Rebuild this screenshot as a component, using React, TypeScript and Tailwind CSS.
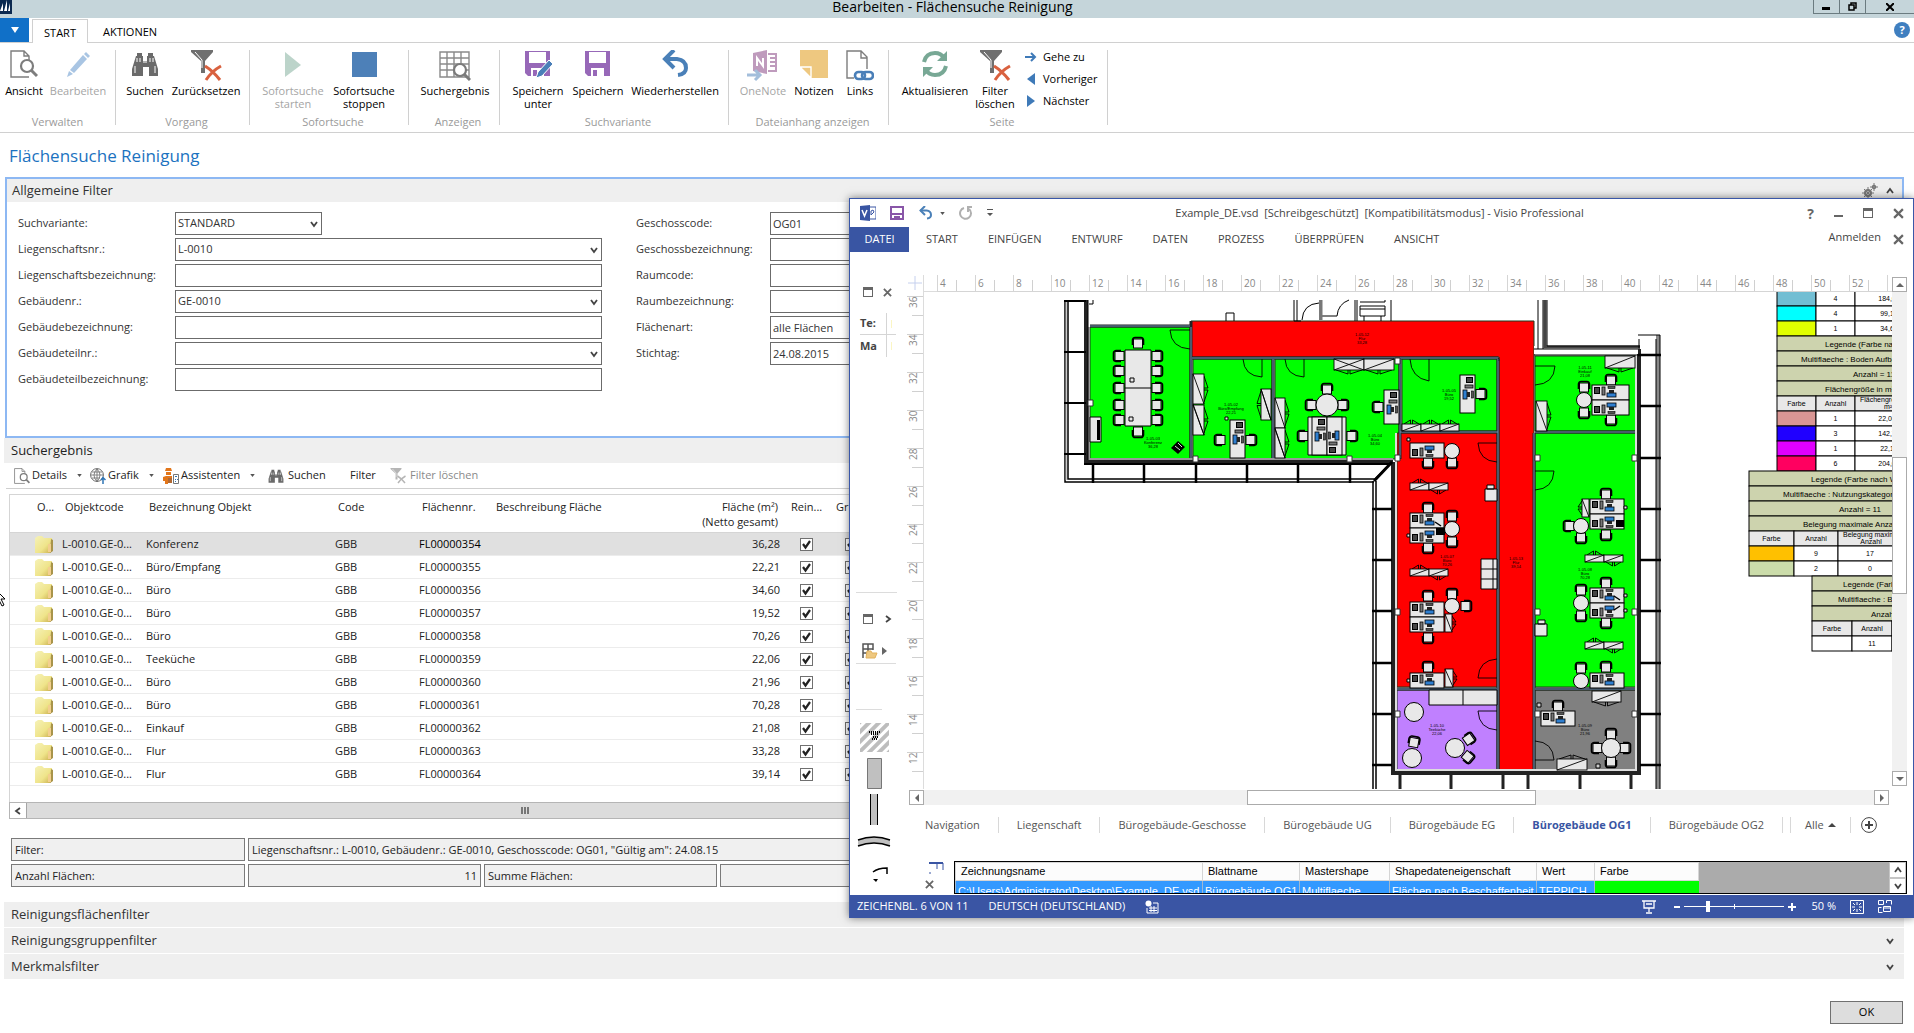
import { ReactNode } from 'react';

type Row = { name: string; nr: string; area: string };

const ROWS: Row[] = [
  { name: 'Konferenz', nr: 'FL00000354', area: '36,28' },
  { name: 'Büro/Empfang', nr: 'FL00000355', area: '22,21' },
  { name: 'Büro', nr: 'FL00000356', area: '34,60' },
  { name: 'Büro', nr: 'FL00000357', area: '19,52' },
  { name: 'Büro', nr: 'FL00000358', area: '70,26' },
  { name: 'Teeküche', nr: 'FL00000359', area: '22,06' },
  { name: 'Büro', nr: 'FL00000360', area: '21,96' },
  { name: 'Büro', nr: 'FL00000361', area: '70,28' },
  { name: 'Einkauf', nr: 'FL00000362', area: '21,08' },
  { name: 'Flur', nr: 'FL00000363', area: '33,28' },
  { name: 'Flur', nr: 'FL00000364', area: '39,14' },
];

/* ---------- icons ---------- */

function ViewIcon({ className = 'w-7 h-7' }: { className?: string }) {
  return (
    <svg className={className} viewBox="0 0 28 28" fill="none" stroke="#7d7d7d">
      <path d="M19 27H1V1h13l5 5v5M14 1v5h5" strokeWidth="1.4" />
      <circle cx="17" cy="16" r="6" strokeWidth="2.2" fill="#fff" />
      <path d="M21 20l6 6" strokeWidth="3" />
    </svg>
  );
}

function PencilIcon() {
  return (
    <svg className="w-7 h-7" viewBox="0 0 28 28">
      <path d="M6 20L19 5l4 4L10 23z" fill="#a9c5e3" />
      <path d="M20 4l2-2 4 4-2 2zM5 21l4 3-6 3z" fill="#a9c5e3" />
    </svg>
  );
}

function BinocularsIcon({ className = 'w-7 h-7' }: { className?: string }) {
  return (
    <svg className={className} viewBox="0 0 28 28" fill="#6a6a6a">
      <path d="M6 3h5v3h1v5h4V6h1V3h5v3h1l4 13v7h-9v-9h-6v9H1v-7L5 6h1z" />
      <path d="M6 8v4M9 8v4M19 8v4M22 8v4M4 16v7M24 16v7M12 12h4" stroke="#fff" strokeWidth="1" />
    </svg>
  );
}

function FilterClearIcon({ className = 'w-8 h-8', muted = false }: { className?: string; muted?: boolean }) {
  return (
    <svg className={className} viewBox="0 0 32 32">
      <path d="M1 0h22v2l-8 9v12h-4V11L1 2z" fill={muted ? '#b5b5b5' : '#6f6f6f'} />
      <path d="M5 2l7 8v8" stroke="#fff" fill="none" />
      <path d="M15 16q8 5 15 14M31 16q-9 5-15 14" stroke={muted ? '#b5b5b5' : '#d9613f'} strokeWidth="3" fill="none" />
    </svg>
  );
}

function SearchResultIcon() {
  return (
    <svg className="w-8 h-8" viewBox="0 0 32 32" fill="none" stroke="#8a8a8a">
      <path d="M1 2h29v25H1zM1 8h29M1 14h29M1 20h29M8 2v25M15 2v25M22 2v25" strokeWidth="1.4" />
      <circle cx="21" cy="20" r="6" fill="#fff" stroke="#7a7a7a" strokeWidth="2.2" />
      <path d="M25 24l6 6" stroke="#7a7a7a" strokeWidth="3" />
    </svg>
  );
}

function SaveIcon({ pencil = false }: { pencil?: boolean }) {
  return (
    <svg className="w-7 h-7" viewBox="0 0 28 28">
      <path d="M1 1h25v25H4l-3-3z" fill="#9768b8" />
      <path d="M5 2h17v11H5zM7 18h13v8H7z" fill="#fff" />
      <path d="M9 20h4v6H9z" fill="#9768b8" />
      {pencil && <path d="M12 28l2-6 11-12 4 4-11 12z" fill="#4a7fb8" stroke="#fff" strokeWidth="1" />}
    </svg>
  );
}

function UndoIcon({ className = 'w-7 h-7' }: { className?: string }) {
  return (
    <svg className={className} viewBox="0 0 28 28" fill="none" stroke="#4a80b8">
      <path d="M3 9h13q9 1 9 9 0 6-8 7" strokeWidth="4" />
      <path d="M13 0L4 9l9 9" strokeWidth="4" />
    </svg>
  );
}

function OneNoteIcon() {
  return (
    <svg className="w-8 h-8" viewBox="0 0 32 32">
      <path d="M6 3l14-3v24L6 21z" fill="#bf9bbd" />
      <path d="M21 4h8v17h-8" fill="none" stroke="#bf9bbd" strokeWidth="2" />
      <path d="M23 8h6M23 12h6M23 16h6" stroke="#bf9bbd" strokeWidth="2" />
      <path d="M10 16V8l6 8V8" stroke="#fff" strokeWidth="2" fill="none" />
      <path d="M0 25h12M8 20l5 5-5 5" stroke="#a3bedb" strokeWidth="3" fill="none" />
    </svg>
  );
}

function NoteIcon() {
  return (
    <svg className="w-7 h-7" viewBox="0 0 28 28">
      <path d="M0 0h28v28H11L0 17z" fill="#eec880" />
      <path d="M0 17h11v11z" fill="#eec880" stroke="#fff" strokeWidth="1.4" />
    </svg>
  );
}

function LinkIcon() {
  return (
    <svg className="w-7 h-8" viewBox="0 0 28 32" fill="none">
      <path d="M8 28H1V1h14l6 6v12M15 1v7h6" stroke="#7d7d7d" strokeWidth="1.4" />
      <rect x="9" y="22" width="10" height="7" rx="3.5" stroke="#4a7fb8" strokeWidth="2.6" />
      <rect x="16" y="22" width="11" height="7" rx="3.5" stroke="#4a7fb8" strokeWidth="2.6" />
    </svg>
  );
}

function RefreshIcon() {
  return (
    <svg className="w-7 h-7" viewBox="0 0 28 28" fill="none" stroke="#78a895" strokeWidth="4">
      <path d="M3 12Q5 3 14 3q6 0 9 5M25 16q-2 9-11 9-6 0-9-5" />
      <path d="M26 1v10H16zM2 27V17h10z" fill="#78a895" stroke="none" />
    </svg>
  );
}

function Chevron({ className = 'w-2 h-2' }: { className?: string }) {
  return (
    <svg className={className} viewBox="0 0 8 8" fill="none" stroke="#444" strokeWidth="1.8">
      <path d="M1 2l3 4 3-4" />
    </svg>
  );
}

function Caret() {
  return (
    <svg className="w-[5px] h-[3px]" viewBox="0 0 6 4" fill="#555">
      <path d="M0 0h6L3 4z" />
    </svg>
  );
}

function GlobeIcon() {
  return (
    <svg className="w-4 h-4" viewBox="0 0 16 16" fill="none" stroke="#6a6a6a">
      <circle cx="7" cy="7" r="6.4" />
      <path d="M7 1v13M1 7h12M2 4h10M2 10h8M7 1Q1 7 7 13.500M7 1q6 6 0 12.500" strokeWidth=".8" />
      <path d="M13 16V10M11 12l2-2.500L15.500 12" stroke="#2f75b5" strokeWidth="1.5" />
    </svg>
  );
}

function WizardIcon() {
  return (
    <svg className="w-4 h-4" viewBox="0 0 16 16">
      <path d="M3 0h5l1 3H2zM3 4h5v3H3zM0 9l3-1h6v3H5v5H2v-3H0z" fill="#e2761b" />
      <path d="M5 10h4v5H5z" fill="#b06a35" />
      <path d="M10.500 6.500h5v9h-5z" fill="#fff" stroke="#777" />
      <path d="M12 8h2v1h-2zM12 11h1v1h-1zM14 11h1v1h-1zM12 13h1v1h-1z" fill="#2f75b5" />
    </svg>
  );
}

function FolderIcon() {
  return (
    <svg className="w-5 h-5" viewBox="0 0 20 20">
      <defs>
        <linearGradient id="folder" x1="0" y1="0" x2="1" y2="1">
          <stop offset="0" stopColor="#f6f2b8" />
          <stop offset=".6" stopColor="#efe48a" />
          <stop offset="1" stopColor="#c9ad4d" />
        </linearGradient>
      </defs>
      <path d="M1 4l3-2h4l2 2h8v13l-2 2H1z" fill="url(#folder)" />
      <path d="M17 5l2 1v11l-3 2" fill="#a8944a" />
      <path d="M14 10h3v8h-3z" fill="#f3cf8e" />
    </svg>
  );
}

/* ---------- ribbon ---------- */

function RibbonButton({ icon, label, className, disabled }: { icon: ReactNode; label: string; className: string; disabled?: boolean }) {
  return (
    <button
      disabled={disabled}
      className={`flex flex-col items-center whitespace-pre-line text-center leading-[13px] text-black disabled:text-[#a5a5a5] ${className}`}
    >
      <span className="flex h-[34px] items-start justify-center">{icon}</span>
      {label}
    </button>
  );
}

function RibbonGroup({ title, className, children }: { title: string; className: string; children: ReactNode }) {
  return (
    <div className={`flex h-[75px] flex-col justify-between border-r border-[#d0d0d0] ${className}`}>
      <div className="flex">{children}</div>
      <div className="text-center leading-[6px] text-[#9a9a9a]">{title}</div>
    </div>
  );
}

function Ribbon() {
  return (
    <div className="flex h-[90px] border-b border-[#d0d0d0] pt-[7px] text-[11px]">
      <RibbonGroup title="Verwalten" className="w-[116px]">
        <RibbonButton className="w-[48px]" icon={<ViewIcon />} label="Ansicht" />
        <RibbonButton className="w-[60px]" icon={<PencilIcon />} label="Bearbeiten" disabled />
      </RibbonGroup>
      <RibbonGroup title="Vorgang" className="w-[134px] pl-2">
        <RibbonButton className="w-[42px]" icon={<BinocularsIcon />} label="Suchen" />
        <RibbonButton className="w-[80px]" icon={<FilterClearIcon />} label="Zurücksetzen" />
      </RibbonGroup>
      <RibbonGroup title="Sofortsuche" className="w-[159px] pl-2">
        <RibbonButton
          className="w-[70px]"
          icon={<svg className="w-4 h-7" viewBox="0 0 16 28"><path d="M0 2l16 13L0 27z" fill="#bcd4ca" /></svg>}
          label={'Sofortsuche\nstarten'}
          disabled
        />
        <RibbonButton
          className="w-[72px]"
          icon={<span className="mt-0.5 h-[25px] w-[25px] bg-[#4d80b8]" />}
          label={'Sofortsuche\nstoppen'}
        />
      </RibbonGroup>
      <RibbonGroup title="Anzeigen" className="w-[91px] pl-2">
        <RibbonButton className="w-[76px]" icon={<SearchResultIcon />} label="Suchergebnis" />
      </RibbonGroup>
      <RibbonGroup title="Suchvariante" className="w-[229px] pl-2">
        <RibbonButton className="w-[60px]" icon={<SaveIcon pencil />} label={'Speichern\nunter'} />
        <RibbonButton className="w-[60px]" icon={<SaveIcon />} label="Speichern" />
        <RibbonButton className="w-[94px]" icon={<UndoIcon />} label="Wiederherstellen" />
      </RibbonGroup>
      <RibbonGroup title="Dateianhang anzeigen" className="w-[160px] pl-2">
        <RibbonButton className="w-[52px]" icon={<OneNoteIcon />} label="OneNote" disabled />
        <RibbonButton className="w-[50px]" icon={<NoteIcon />} label="Notizen" />
        <RibbonButton className="w-[42px]" icon={<LinkIcon />} label="Links" />
      </RibbonGroup>
      <RibbonGroup title="Seite" className="w-[219px] pl-2">
        <RibbonButton className="w-[76px]" icon={<RefreshIcon />} label="Aktualisieren" />
        <RibbonButton className="w-[44px]" icon={<FilterClearIcon />} label={'Filter\nlöschen'} />
        <div className="flex flex-col gap-[8px] pl-2">
          <button className="flex items-center gap-1.5 leading-[14px]">
            <svg className="w-3 h-3" viewBox="0 0 12 12" fill="none" stroke="#3f7ab8" strokeWidth="2"><path d="M0 6h10M6 2l4 4-4 4" /></svg>
            Gehe zu
          </button>
          <button className="flex items-center gap-1.5 leading-[14px]">
            <svg className="w-3 h-3" viewBox="0 0 12 12" fill="#3f7ab8"><path d="M10 0v12L2 6z" /></svg>
            Vorheriger
          </button>
          <button className="flex items-center gap-1.5 leading-[14px]">
            <svg className="w-3 h-3" viewBox="0 0 12 12" fill="#3f7ab8"><path d="M2 0v12l8-6z" /></svg>
            Nächster
          </button>
        </div>
      </RibbonGroup>
    </div>
  );
}

/* ---------- filter form ---------- */

const FIELD = 'h-[23px] border border-[#6b6b6b] bg-white px-[2px] text-[11px] text-[#333] outline-none';

function Field({ id, label, value = '', combo, small, wide }: { id: string; label: string; value?: string; combo?: boolean; small?: boolean; wide?: boolean }) {
  const width = small ? 'w-[147px]' : 'w-[427px]';
  return (
    <div className="flex h-[26px]">
      <label htmlFor={id} className={`pt-0.5 leading-[18px] whitespace-nowrap ${wide ? 'w-[134px]' : 'w-[157px]'}`}>
        {label}
      </label>
      {combo ? (
        <span className="inline-grid">
          <select id={id} defaultValue={value} className={`${FIELD} ${width} col-start-1 row-start-1 appearance-none`}>
            <option>{value}</option>
          </select>
          <Chevron className="pointer-events-none col-start-1 row-start-1 mt-2 mr-1 h-2 w-2 justify-self-end" />
        </span>
      ) : (
        <input id={id} defaultValue={value} className={`${FIELD} ${width}`} />
      )}
    </div>
  );
}

function FilterPanel() {
  return (
    <section className="mr-[10px] ml-[5px] h-[261px] border-2 border-[#8db8f3] text-[11px] text-[#333]">
      <header className="flex h-[23px] items-center justify-between bg-[#efefef] pr-[8px] pl-[5px]">
        <h2 className="text-[13px] text-[#333]">Allgemeine Filter</h2>
        <span className="flex items-center gap-2">
          <svg className="w-4 h-4" viewBox="0 0 16 16" fill="none" stroke="#777" strokeWidth="2">
            <circle cx="6" cy="10" r="3" />
            <path d="M6 4v12M0 10h12M2 6l8 8M10 6l-8 8" strokeWidth="1" />
            <circle cx="12" cy="4" r="1.5" strokeWidth="1.500" />
            <path d="M12 0v8M8 4h8" strokeWidth="1" />
          </svg>
          <Chevron className="h-2 w-2 rotate-180" />
        </span>
      </header>
      <div className="flex gap-[34px] pt-[10px] pl-[11px]">
        <div>
          <Field id="variante" label="Suchvariante:" value="STANDARD" combo small />
          <Field id="liegnr" label="Liegenschaftsnr.:" value="L-0010" combo />
          <Field id="liegbez" label="Liegenschaftsbezeichnung:" />
          <Field id="gebnr" label="Gebäudenr.:" value="GE-0010" combo />
          <Field id="gebbez" label="Gebäudebezeichnung:" />
          <Field id="teilnr" label="Gebäudeteilnr.:" combo />
          <Field id="teilbez" label="Gebäudeteilbezeichnung:" />
        </div>
        <div>
          <Field id="gcode" label="Geschosscode:" value="OG01" wide />
          <Field id="gbez" label="Geschossbezeichnung:" wide />
          <Field id="rcode" label="Raumcode:" wide />
          <Field id="rbez" label="Raumbezeichnung:" wide />
          <Field id="fart" label="Flächenart:" value="alle Flächen" wide />
          <Field id="stichtag" label="Stichtag:" value="24.08.2015" wide />
        </div>
      </div>
    </section>
  );
}

/* ---------- result list ---------- */

function Check({ label }: { label: string }) {
  return (
    <span className="inline-grid align-middle">
      <input type="checkbox" defaultChecked aria-label={label} className="col-start-1 row-start-1 h-[13px] w-[13px] appearance-none border border-[#707070] bg-white" />
      <svg className="pointer-events-none col-start-1 row-start-1 h-[13px] w-[13px]" viewBox="0 0 13 13" fill="none" stroke="#222" strokeWidth="2.200">
        <path d="M3 6l2.500 3.500L10 3" />
      </svg>
    </span>
  );
}

function Results() {
  return (
    <section className="mr-[10px] ml-1 text-[11px] text-[#222]">
      <h2 className="flex h-[25px] items-center bg-[#efefef] pl-[7px] text-[13px]">Suchergebnis</h2>
      <div className="ml-0.5 flex h-[26px] items-center border-b border-[#cfcfcf] pl-[8px]">
        <button className="flex w-[76px] items-center gap-0.5"><ViewIcon className="h-4 w-4" /><span className="mr-2">Details</span><Caret /></button>
        <button className="flex w-[73px] items-center gap-0.5"><GlobeIcon /><span className="mr-2">Grafik</span><Caret /></button>
        <button className="flex w-[105px] items-center gap-0.5"><WizardIcon /><span className="mr-2">Assistenten</span><Caret /></button>
        <button className="flex w-[82px] items-center gap-1"><BinocularsIcon className="h-4 w-4" />Suchen</button>
        <button className="w-[40px] text-left">Filter</button>
        <button className="flex items-center gap-1 text-[#8a8a8a]"><FilterClearIcon className="h-4 w-4" muted />Filter löschen</button>
      </div>
      <div className="mt-[5px] ml-[5px] h-[308px] border-t border-l border-[#d5d5d5]">
        <table className="w-full table-fixed border-collapse whitespace-nowrap">
          <colgroup>
            <col className="w-[52px]" />
            <col className="w-[84px]" />
            <col className="w-[189px]" />
            <col className="w-[84px]" />
            <col className="w-[74px]" />
            <col className="w-[170px]" />
            <col className="w-[125px]" />
            <col className="w-[45px]" />
            <col />
          </colgroup>
          <thead>
            <tr className="h-[37px] border-b border-[#d5d5d5] text-left align-top leading-[15px] [&>th]:pt-[4px] [&>th]:pl-[3px] [&>th]:font-normal">
              <th><span className="pl-6">O...</span></th>
              <th>Objektcode</th>
              <th>Bezeichnung Objekt</th>
              <th>Code</th>
              <th>Flächennr.</th>
              <th>Beschreibung Fläche</th>
              <th className="pr-[10px] text-right">Fläche (m²)<br />(Netto gesamt)</th>
              <th>Rein...</th>
              <th>Gr</th>
            </tr>
          </thead>
          <tbody>
            {ROWS.map((r, i) => (
              <tr key={r.nr} className={`h-[23px] border-b border-[#ececec] leading-[20px] ${i === 0 ? 'bg-[#e0e0e0]' : ''}`}>
                <td className="pl-6"><FolderIcon /></td>
                <td>L-0010.GE-0...</td>
                <td>{r.name}</td>
                <td>GBB</td>
                <td className={i === 0 ? 'text-black' : ''}>{r.nr}</td>
                <td />
                <td className="pr-[8px] text-right">{r.area}</td>
                <td className="pl-3"><Check label={`Reinigung ${r.nr}`} /></td>
                <td className="pl-3"><Check label={`Gruppe ${r.nr}`} /></td>
              </tr>
            ))}
          </tbody>
        </table>
      </div>
      <div className="ml-[5px] flex h-[17px] border border-[#b5b5b5] bg-[#f0f0f0]">
        <button aria-label="Nach links" className="flex w-[17px] items-center justify-center border-r border-[#a5a5a5] bg-white">
          <Chevron className="h-2 w-2 rotate-90" />
        </button>
        <div className="flex w-[996px] items-center justify-center gap-px border-r border-[#a5a5a5] bg-[#dcdcdc]">
          <i className="h-[7px] w-0.5 bg-[#777]" /><i className="h-[7px] w-0.5 bg-[#777]" /><i className="h-[7px] w-0.5 bg-[#777]" />
        </div>
      </div>
      <div className="mt-[19px] ml-[7px] flex flex-col gap-[3px] [&_input]:h-[23px] [&_input]:border [&_input]:border-[#7a7a7a] [&_input]:bg-[#f0f0f0] [&_input]:px-[3px]">
        <div className="flex gap-[3px]">
          <input aria-label="Filter" readOnly value="Filter:" className="w-[234px]" />
          <input aria-label="Filterwert" readOnly value={'Liegenschaftsnr.: L-0010, Gebäudenr.: GE-0010, Geschosscode: OG01, "Gültig am": 24.08.15'} className="flex-1" />
        </div>
        <div className="flex gap-[3px]">
          <input aria-label="Anzahl" readOnly value="Anzahl Flächen:" className="w-[234px]" />
          <input aria-label="Anzahl Flächen" readOnly value="11" className="w-[233px] text-right" />
          <input aria-label="Summe" readOnly value="Summe Flächen:" className="w-[233px]" />
          <input aria-label="Summe Flächen" readOnly value="" className="flex-1" />
        </div>
      </div>
    </section>
  );
}

/* ---------- floor plan ---------- */

const F = '#e8e8e8';

function Chair({ x, y, r = 0 }: { x: number; y: number; r?: number }) {
  return (
    <g transform={`translate(${x} ${y}) rotate(${r})`}>
      <rect x="-4.500" y="-4" width="9" height="9" fill={F} stroke="#000" />
      <path d="M-5.500 2V-3Q-5-5.500-3-5.500H3Q5-5.500 5.500-3V2" fill="none" stroke="#000" strokeWidth="1.600" />
    </g>
  );
}

function Desk({ x, y, w = 34, r = 0, flip }: { x: number; y: number; w?: number; r?: number; flip?: boolean }) {
  return (
    <g transform={`translate(${x} ${y}) rotate(${r})${flip ? ' translate(0 15) scale(1 -1)' : ''}`}>
      <rect width={w} height="15" fill={F} stroke="#000" />
      <rect x="2.500" y="2.500" width="5" height="6" fill="#444" stroke="#000" />
      <rect x="10" y="2" width="3" height="8" fill="#777" stroke="#000" strokeWidth=".8" />
      <rect x="15" y="8" width="9" height="4" fill="#2f7fd0" stroke="#000" strokeWidth=".8" />
      <rect x="17" y="5" width="5" height="3" fill="#222" />
      <rect x="16" y="1.500" width="7" height="2" fill="#555" stroke="#000" strokeWidth=".6" />
    </g>
  );
}

function Round({ x, y, r = 7.5 }: { x: number; y: number; r?: number }) {
  return <circle cx={x} cy={y} r={r} fill={F} stroke="#000" />;
}

/* double door cabinet, wings open to the bottom of the box */
function Cabinet({ x, y, w, h, r = 0 }: { x: number; y: number; w: number; h: number; r?: number }) {
  const m = w / 2;
  return (
    <g transform={`translate(${x} ${y}) rotate(${r})`} stroke="#000" strokeWidth=".9" fill="none">
      <path d={`M2 ${h}l${m - 3} 4v-4M${w - 2} ${h}l${3 - m} 4v-4`} />
      <rect width={w} height={h} fill={F} />
      <path d={`M0 ${h}L${w} 0`} />
    </g>
  );
}

function CabinetPair({ x, y }: { x: number; y: number }) {
  return (
    <>
      <Cabinet x={x + 19} y={y + 7} w={19} h={7} r={180} />
      <Cabinet x={x + 19} y={y} w={19} h={7} />
    </>
  );
}

function RoomLabel({ x, y, lines }: { x: number; y: number; lines: string[] }) {
  return (
    <g fontSize="4" textAnchor="middle" fill="#000">
      {lines.map((l, i) => (
        <text key={i} x={x} y={y + i * 4}>{l}</text>
      ))}
    </g>
  );
}

const YS = [510, 561, 612, 664, 715, 766];

function FloorPlan() {
  return (
    <g>
      {/* rooms */}
      <g stroke="#1d3a1d" strokeWidth="1">
        <path d="M1090 328h100v132h-100zM1193 360h79v100h-79zM1275 360h124v100h-124zM1402 360h95v72h-95zM1535 357h101v75h-101zM1535 434h101v254h-101z" fill="#00ff00" />
        <path d="M1397 434h100v254h-100z" fill="#f00" />
        <path d="M1397 691h100v80h-100z" fill="#c080ff" />
        <path d="M1535 691h101v80h-101z" fill="#808080" />
        <path d="M1191 322h343v449h-35V358h-308z" fill="#f00" />
      </g>
      {/* partition walls */}
      <g fill="none">
        <path d="M1090 327h100M1192 359h306M1400 433h98M1535 433h101M1397 690h100M1535 690h101M1191 322v138M1273 359v101M1400 359v101M1498 359v412M1534 434v337" stroke="#222" strokeWidth="3" />
        <path d="M1090 327h100M1192 359h306M1400 433h98M1535 433h101M1397 690h100M1535 690h101M1191 328v131M1273 360v99M1400 360v99M1498 360v411M1534 434v337" stroke="#6f94b8" strokeWidth="1" />
        {/* the corridor runs through without a wall */}
        <path d="M1499.500 358.500h33" stroke="#f00" strokeWidth="3" />
        <path d="M1499 358v4" stroke="#222" />
      </g>
      {/* outer walls */}
      <g fill="none" stroke="#000">
        <path d="M1086 301v162h307" stroke="#222" strokeWidth="4" />
        <path d="M1089 328v132h304" stroke="#999" strokeWidth="2" />
        <path d="M1088 301v160M1093 301v4h-4" />
        <path d="M1084 465h308" strokeWidth="2" />
        <path d="M1393 463v311h246V350" strokeWidth="4" stroke="#222" />
        <path d="M1396 434v337h240V357" stroke="#ddd" strokeWidth="2" />
        <path d="M1534 351h104" stroke="#fff" strokeWidth="8" />
        <path d="M1538 301v49M1534 356h104M1534 350h104" strokeWidth="1" />
        <path d="M1545 301v47h95" stroke="#444" strokeWidth="3" />
        <path d="M1547 301v46h93M1543 301v49" />
      </g>
      {/* facade */}
      <g fill="none" stroke="#000">
        <path d="M1065 301v182h309M1068 301v179h307l17-17" strokeWidth="1.500" />
        <path d="M1066 301v180" stroke="#999" />
        <path d="M1374 482l18-19" strokeWidth="3" />
        <path d="M1373 482v308M1376 482v308" strokeWidth="1.500" />
        <path d="M1064 302h22M1064 353h22M1064 404h22M1064 455h22" strokeWidth="2" />
        <path d="M1093 465v19M1144 465v19M1196 465v19M1247 465v19M1298 465v19M1350 465v19" strokeWidth="2.500" />
        <path d="M1658 336v454" stroke="#888" strokeWidth="4" />
        <path d="M1660 336v454M1638 336h22M1639 340v10M1656 340v450" />
        {YS.map((y) => (
          <path key={y} d={`M1372 ${y}h20M1640 ${y}h21`} strokeWidth="2.500" />
        ))}
        <path d="M1638 356h23M1640 407h21M1640 459h21" strokeWidth="2.500" />
        <path d="M1400 776v14M1451 776v14M1503 776v14M1528 776v14M1580 776v14M1631 776v14" strokeWidth="3" stroke="#222" />
      </g>
      {/* stairs and lobby */}
      <g fill="none" stroke="#000">
        <path d="M1294 301v21h7M1297 301v21M1302 321q1-16 17-17M1320 301v20M1320 317h17q1-12 12-16M1355 301v21M1357 301v21M1391 301v21M1226 322v-8h8v8" />
        <path d="M1321 301v20" stroke="#777" strokeWidth="3" />
        <path d="M1360 303h25v-2M1360 307h25v10h-25zM1364 317v5M1381 317v5M1360 310h25" />
      </g>
      {/* door swings */}
      <g fill="none" stroke="#000" strokeWidth=".9">
        <path d="M1190 331h-20q1 18 20 19M1262 360v18q-18-1-19-18M1304 360v18q-18-1-19-18M1429 360v22q-18-3-19-22" />
        <path d="M1535 367h20q-1 18-20 19M1535 472h19q-1 18-19 19M1535 761h19q-1-18-19-19" />
        <path d="M1497 444h-19q1 18 19 19M1497 679h-19q1-18 19-19M1497 712h-19q1 18 19 19" />
      </g>
      {/* conference */}
      {[357, 372, 389, 406, 421].map((y) => (
        <g key={y}>
          <Chair x={1119} y={y} r={270} />
          <Chair x={1157} y={y} r={90} />
        </g>
      ))}
      <Chair x={1138} y={344} />
      <Chair x={1138} y={433} r={180} />
      <path d="M1125 351h26v76h-26zM1125 389h26" fill={F} stroke="#000" />
      <path d="M1130 379h4v4h-4zM1129 418h4v4h-4zM1090 418h11v25h-11z" fill={F} stroke="#000" />
      <path d="M1097 421h3v20h-3z" />
      <path d="M1171 449l7-7 7 6-7 7z" />
      <path d="M1175 447l5 4M1178 444l4 4" stroke="#ddd" />
      {/* reception */}
      <Cabinet x={1193} y={405} w={30} h={11} r={270} />
      <Cabinet x={1193} y={436} w={30} h={11} r={270} />
      <Cabinet x={1271} y={390} w={31} h={10} r={90} />
      <path d="M1193 405l11 31M1261 390l10 31" stroke="#000" strokeWidth=".9" />
      <Chair x={1220} y={441} r={270} />
      <Chair x={1251} y={441} r={90} />
      <Desk x={1245} y={421} w={38} r={90} />
      <path d="M1225 418h3v3h-3z" fill={F} stroke="#000" />
      {/* office 356 */}
      <Cabinet x={1275} y={429} w={30} h={10} r={270} />
      <Cabinet x={1275} y={459} w={30} h={10} r={270} />
      <Cabinet x={1334} y={360} w={30} h={11} />
      <Cabinet x={1364} y={360} w={30} h={11} />
      <path d="M1275 430l10 29M1334 360l30 11" stroke="#000" strokeWidth=".9" />
      <Chair x={1327} y={390} />
      <Chair x={1311} y={406} r={270} />
      <Chair x={1343} y={406} r={90} />
      <Round x={1327} y={406} r={11} />
      <Chair x={1303} y={437} r={270} />
      <Chair x={1352} y={437} r={90} />
      <path d="M1308 418h38v38h-38z" fill={F} stroke="#000" />
      <Desk x={1327} y={418} w={38} r={90} />
      <Desk x={1327} y={456} w={38} r={270} />
      <Chair x={1378} y={408} r={270} />
      <Desk x={1399} y={391} w={34} r={90} />
      {/* office 357 */}
      <Chair x={1481} y={395} r={90} />
      <Desk x={1475} y={376} w={38} r={90} />
      <Cabinet x={1421} y={432} w={19} h={7} r={180} />
      <Cabinet x={1440} y={432} w={19} h={7} r={180} />
      <Cabinet x={1459} y={432} w={19} h={7} r={180} />
      {/* office 361 */}
      <Cabinet x={1605} y={357} w={30} h={12} />
      <Cabinet x={1536} y={432} w={30} h={11} r={270} />
      <Chair x={1611} y={381} />
      <Chair x={1611} y={421} r={180} />
      <Chair x={1584} y={388} />
      <Chair x={1584} y={414} r={180} />
      <Round x={1584} y={401} />
      <Desk x={1592} y={386} w={37} />
      <Desk x={1592} y={401} w={37} flip />
      {/* left open office */}
      <path d="M1407 439h3v3h-3zM1407 535h3v3h-3zM1407 680h3v3h-3z" fill={F} stroke="#000" />
      <Chair x={1428} y={464} r={180} />
      <Chair x={1452} y={464} r={180} />
      <Desk x={1410} y={444} flip />
      <Round x={1452} y={452} />
      <CabinetPair x={1410} y={484} />
      <Chair x={1428} y={509} />
      <Chair x={1428} y={549} r={180} />
      <Chair x={1452} y={517} />
      <Chair x={1452} y={543} r={180} />
      <Desk x={1410} y={514} />
      <Desk x={1410} y={529} flip />
      <Round x={1452} y={530} />
      <path d="M1436 529h9v7h-9z" />
      <path d="M1435 523l6 4" stroke="#000" strokeWidth="1.500" />
      <CabinetPair x={1410} y={570} />
      <Chair x={1428} y={597} />
      <Chair x={1428} y={639} r={180} />
      <Chair x={1452} y={595} />
      <Chair x={1466} y={607} r={90} />
      <Desk x={1410} y={603} />
      <Desk x={1410} y={618} flip />
      <Round x={1452} y={607} />
      <Cabinet x={1445} y={633} w={18} h={7} r={270} />
      <Chair x={1428} y={668} />
      <Desk x={1410} y={674} />
      <Cabinet x={1445} y={688} w={18} h={8} r={270} />
      <path d="M1485 490h12v12h-12zM1487 486h7v4h-7zM1481 560h16v30h-16zM1481 570h16M1481 580h16M1493 560v30" fill={F} stroke="#000" />
      {/* right open office */}
      <Chair x={1606} y={495} />
      <Chair x={1606} y={536} r={180} />
      <Chair x={1569} y={527} r={270} />
      <Chair x={1581} y={539} r={180} />
      <Desk x={1590} y={500} />
      <Desk x={1590} y={515} flip />
      <Cabinet x={1589} y={500} w={18} h={7} r={90} />
      <Round x={1581} y={527} />
      <path d="M1616 521h8v7h-8z" />
      <CabinetPair x={1585} y={556} />
      <Chair x={1606} y={584} />
      <Chair x={1606} y={624} r={180} />
      <Chair x={1581} y={591} />
      <Chair x={1581} y={617} r={180} />
      <Desk x={1590} y={589} />
      <Desk x={1590} y={604} flip />
      <Round x={1581} y={604} />
      <path d="M1614 597l6 4M1614 611l6-4" stroke="#000" strokeWidth="1.500" />
      <CabinetPair x={1585} y={643} />
      <Chair x={1606} y={668} />
      <Chair x={1581} y={669} />
      <Desk x={1590} y={674} />
      <Round x={1581} y={682} />
      <path d="M1535 625h12v12h-12zM1538 621h7v4h-7zM1624 507h3v3h-3zM1624 595h3v3h-3zM1624 610h3v3h-3z" fill={F} stroke="#000" />
      {/* kitchen */}
      <path d="M1429 691h68v15h-68zM1463 691v15" fill={F} stroke="#000" />
      <Chair x={1414} y={743} r={10} />
      <Chair x={1469} y={740} r={55} />
      <Chair x={1468} y={758} r={130} />
      <Round x={1414} y={713} r={9.5} />
      <Round x={1412} y={759} r={9.5} />
      <Round x={1455} y={749} r={9.5} />
      {/* purchasing */}
      <Cabinet x={1592} y={692} w={29} h={11} />
      <Cabinet x={1587} y={771} w={30} h={11} r={180} />
      <Chair x={1558} y={707} />
      <Desk x={1541} y={712} />
      <Chair x={1611} y={735} />
      <Chair x={1611} y={763} r={180} />
      <Chair x={1597} y={749} r={270} />
      <Chair x={1625} y={749} r={90} />
      <Round x={1611} y={749} r={9.5} />
      <path d="M1537 704h4v4h-4zM1596 765h4v4h-4z" fill="#ccc" stroke="#000" />
      {/* wall pillars */}
      <path
        d="M1395 456h5v6h-5zM1395 610h5v6h-5zM1395 712h5v6h-5zM1535 456h5v6h-5zM1535 610h5v6h-5zM1535 712h5v6h-5zM1632 456h5v6h-5zM1632 610h5v6h-5zM1632 712h5v6h-5zM1088 401h5v6h-5zM1193 457h5v6h-5zM1347 457h5v6h-5zM1395 359h5v6h-5z"
        fill="#fff"
        stroke="#333"
      />
      <RoomLabel x={1153} y={441} lines={['1-05-03', 'Konferenz', '36,28']} />
      <RoomLabel x={1231} y={407} lines={['1-05-02', 'Büro/Empfang', '22,21']} />
      <RoomLabel x={1375} y={438} lines={['1-05-04', 'Büro', '34,60']} />
      <RoomLabel x={1362} y={337} lines={['1-05-12', 'Flur', '33,28']} />
      <RoomLabel x={1449} y={393} lines={['1-05-05', 'Büro', '19,52']} />
      <RoomLabel x={1585} y={370} lines={['1-05-11', 'Einkauf', '21,08']} />
      <RoomLabel x={1447} y={559} lines={['1-05-07', 'Büro', '70,26']} />
      <RoomLabel x={1516} y={561} lines={['1-05-13', 'Flur', '39,14']} />
      <RoomLabel x={1585} y={572} lines={['1-05-08', 'Büro', '70,28']} />
      <RoomLabel x={1437} y={728} lines={['1-05-10', 'Teeküche', '22,06']} />
      <RoomLabel x={1585} y={728} lines={['1-05-09', 'Büro', '21,96']} />
    </g>
  );
}

/* Legend blocks beside the plan. A band is one text over the full width,
   a line is colour | count | value. */
type LegendItem = { band: string; x: number } | { color: string; cells: string[]; head?: boolean };

function Legend({ left, cols, top, items }: { left: number; cols: number[]; top: number; items: LegendItem[] }) {
  return (
    <g stroke="#000" fontSize="8">
      {items.map((it, i) => {
        const y = top + i * 15;
        if ('band' in it) {
          return (
            <g key={i}>
              <rect x={left} y={y} width="160" height="15" fill="#cdd3ae" />
              <text x={it.x} y={y + 11} stroke="none">{it.band}</text>
            </g>
          );
        }
        const fill = it.head ? '#e8e8e8' : '#fff';
        return (
          <g key={i} textAnchor="middle">
            <rect x={left} y={y} width={cols[0] - left} height="15" fill={it.color} />
            <rect x={cols[0]} y={y} width={cols[1] - cols[0]} height="15" fill={fill} />
            <rect x={cols[1]} y={y} width="90" height="15" fill={fill} />
            <g stroke="none" fontSize="7">
              {it.head && <text x={(left + cols[0]) / 2} y={y + 10}>Farbe</text>}
              <text x={(cols[0] + cols[1]) / 2} y={y + 10}>{it.cells[0]}</text>
              {it.head && it.cells.length > 2 ? (
                <>
                  <text x={cols[1] + 5} y={y + 6} textAnchor="start">{it.cells[1]}</text>
                  <text x={cols[1] + 33} y={y + 13}>{it.cells[2]}</text>
                </>
              ) : (
                <text x={cols[1] + 32} y={y + 10}>{it.cells[1]}</text>
              )}
            </g>
          </g>
        );
      })}
    </g>
  );
}

function Drawing() {
  return (
    <svg width="968" height="497" className="block shrink-0" fontFamily="Liberation Sans, sans-serif">
      <g transform="translate(-924 -293)">
        <FloorPlan />
        <Legend
          left={1777}
          cols={[1816, 1855]}
          top={292}
          items={[
            { color: '#72bed3', cells: ['4', '184,6'] },
            { color: '#00ffff', cells: ['4', '99,1'] },
            { color: '#e0ff00', cells: ['1', '34,6'] },
            { band: 'Legende (Farbe nach', x: 1825 },
            { band: 'Multiflaeche : Boden Aufbau', x: 1801 },
            { band: 'Anzahl = 11', x: 1853 },
            { band: 'Flächengröße in m²', x: 1825 },
            { color: '#e8e8e8', cells: ['Anzahl', 'Flächengröße', 'm²'], head: true },
            { color: '#d99694', cells: ['1', '22,06'] },
            { color: '#2000ff', cells: ['3', '142,7'] },
            { color: '#e000ff', cells: ['1', '22,1'] },
            { color: '#ff0060', cells: ['6', '204,0'] },
          ]}
        />
        <Legend
          left={1749}
          cols={[1794, 1838]}
          top={472}
          items={[
            { band: 'Legende (Farbe nach Wert)', x: 1811 },
            { band: 'Multiflaeche : Nutzungskategorie', x: 1783 },
            { band: 'Anzahl = 11', x: 1839 },
            { band: 'Belegung maximale Anzahl', x: 1803 },
            { color: '#e8e8e8', cells: ['Anzahl', 'Belegung maximale', 'Anzahl'], head: true },
            { color: '#ffc000', cells: ['9', '17'] },
            { color: '#cbdcaa', cells: ['2', '0'] },
          ]}
        />
        <Legend
          left={1812}
          cols={[1852, 1892]}
          top={577}
          items={[
            { band: 'Legende (Farbe', x: 1843 },
            { band: 'Multiflaeche : Bezeichnung', x: 1838 },
            { band: 'Anzahl', x: 1871 },
            { color: '#e8e8e8', cells: ['Anzahl', ''], head: true },
            { color: '#fff', cells: ['11', ''] },
          ]}
        />
      </g>
    </svg>
  );
}

/* ---------- visio window ---------- */

const MENU = ['START', 'EINFÜGEN', 'ENTWURF', 'DATEN', 'PROZESS', 'ÜBERPRÜFEN', 'ANSICHT'];
const PAGES = ['Navigation', 'Liegenschaft', 'Bürogebäude-Geschosse', 'Bürogebäude UG', 'Bürogebäude EG', 'Bürogebäude OG1', 'Bürogebäude OG2'];
const H_MARKS = Array.from({ length: 25 }, (_, i) => 4 + i * 2);
const V_MARKS = Array.from({ length: 13 }, (_, i) => 36 - i * 2);

function CloseIcon({ className = 'w-[11px] h-[11px]' }: { className?: string }) {
  return (
    <svg className={className} viewBox="0 0 10 10" stroke="#666" strokeWidth="2">
      <path d="M1 1l8 8M9 1L1 9" />
    </svg>
  );
}

function ScrollArrow({ d, className }: { d: string; className: string }) {
  return (
    <button aria-label="Bildlauf" className={`flex shrink-0 items-center justify-center border border-[#ababab] bg-white ${className}`}>
      <svg className="h-2 w-2" viewBox="0 0 8 8" fill="#666"><path d={d} /></svg>
    </button>
  );
}

function VisioHeader() {
  return (
    <>
      <div className="flex h-[28px] items-center pl-[10px]">
        <svg className="w-4 h-4" viewBox="0 0 16 16">
          <path d="M8 2h8v12H8z" fill="#fff" stroke="#3955a3" />
          <path d="M0 1l10-1v16L0 15z" fill="#3955a3" />
          <path d="M2 5l2.500 6L7 5" stroke="#fff" strokeWidth="1.500" fill="none" />
          <path d="M11 10l3-3-1-2-2 1z" stroke="#3955a3" fill="none" />
        </svg>
        <svg className="ml-[14px] h-[14px] w-[14px]" viewBox="0 0 14 14">
          <path d="M1 1h12v12H1z" fill="none" stroke="#8956a8" strokeWidth="2" />
          <path d="M1 7h12v2H1zM4 10h6v4H4z" fill="#8956a8" />
        </svg>
        <UndoIcon className="ml-[14px] h-[14px] w-[15px]" />
        <span className="ml-[7px]"><Caret /></span>
        <svg className="ml-[14px] h-[14px] w-[14px]" viewBox="0 0 14 14" fill="none" stroke="#b0b0b0" strokeWidth="2">
          <path d="M5 2a5.500 5.500 0 1 0 5 1M13 1H9v5" />
        </svg>
        <svg className="ml-[14px] h-2 w-[6px]" viewBox="0 0 6 8" fill="#555"><path d="M0 0h6v1H0zM0 4h6L3 7z" /></svg>
        <div className="flex-1 pl-[70px] text-center whitespace-pre text-[#444]">Example_DE.vsd  [Schreibgeschützt]  [Kompatibilitätsmodus] - Visio Professional</div>
        <div className="flex w-[217px] items-center justify-end gap-[20px] pr-[9px]">
          <button aria-label="Hilfe" className="text-[14px] font-bold text-[#666]">?</button>
          <button aria-label="Minimieren" className="mt-[6px] h-0.5 w-[9px] bg-[#666]" />
          <button aria-label="Maximieren" className="h-[10px] w-[10px] border border-t-[3px] border-[#666]" />
          <button aria-label="Schließen"><CloseIcon /></button>
        </div>
      </div>
      <div className="flex h-[25px] items-center text-[11px] text-[#444]">
        <button className="mr-[2px] h-[25px] w-[59px] bg-[#3955a3] text-white">DATEI</button>
        {MENU.map((m) => (
          <button key={m} className="px-[15px]">{m}</button>
        ))}
        <div className="flex flex-1 items-center justify-end gap-[12px] pr-[9px]">
          <a href="#anmelden" className="-mt-1">Anmelden</a>
          <button aria-label="Zeichnung schließen"><CloseIcon /></button>
        </div>
      </div>
    </>
  );
}

function ShapesPane() {
  return (
    <aside className="w-[57px] shrink-0 pl-[6px] text-[11px] font-bold text-[#444]">
      <div className="flex items-center gap-[10px] pt-[12px] pl-[7px]">
        <i className="h-[10px] w-[10px] border border-t-[3px] border-[#666]" />
        <CloseIcon className="h-[9px] w-[9px]" />
      </div>
      <div className="mt-[16px] w-[40px] pl-1">
        <div className="flex h-[22px] items-center border-b border-[#d5d5d5]"><span className="w-[17px]">Te:</span><i className="ml-[9px] h-full w-px bg-[#d5d5d5]" /><i className="ml-1 h-2 w-px bg-[#fbf6c4]" /></div>
        <div className="flex h-[22px] items-center"><span className="w-[17px]">Ma</span><i className="ml-[9px] h-full w-px bg-[#d5d5d5]" /><i className="ml-1 h-2 w-px bg-[#fbf6c4]" /></div>
      </div>
      <div className="mt-[235px] flex w-[41px] items-center gap-[11px] border-t border-[#dcdcdc] pt-[21px] pl-[7px]">
        <i className="h-[10px] w-[10px] border border-t-[3px] border-[#666]" />
        <Chevron className="h-2 w-2 -rotate-90" />
      </div>
      <div className="mt-[19px] flex h-[21px] w-[40px] items-center gap-1 border-b border-[#dcdcdc] pb-1 pl-[6px]">
        <svg className="w-4 h-4" viewBox="0 0 16 16" fill="none" stroke="#555" strokeWidth="1.500">
          <path d="M1 15V1h10v6M1 6h10M6 1v9M1 10h4" />
          <path d="M4 15l1-7h4l1 2h5l-2 5z" fill="#eec880" stroke="#e3b25c" strokeWidth="1" />
        </svg>
        <svg className="h-2 w-[5px]" viewBox="0 0 5 8" fill="#666"><path d="M0 0v8l5-4z" /></svg>
      </div>
      <div className="mt-[45px] h-px w-[26px] bg-[#dcdcdc]" />
      <svg className="mt-[13px] h-[162px] w-[36px]" viewBox="0 0 36 162">
        <defs>
          <pattern id="hatch" width="7" height="7" patternUnits="userSpaceOnUse" patternTransform="rotate(45)">
            <path d="M0 0h4v7H0z" fill="#bdbdbd" />
          </pattern>
        </defs>
        <path d="M4 0h29v29H4z" fill="url(#hatch)" />
        <path d="M13 9h12M15 11h8M17 14h5M16 16h6" stroke="#000" strokeDasharray="1 1" strokeWidth="2" />
        <path d="M11.500 35.500h14v30h-14z" fill="#c0c0c0" stroke="#777" />
        <path d="M15 71h6v31h-6z" fill="#c0c0c0" />
        <path d="M14.500 71v31M21.500 71v31" stroke="#000" />
        <path d="M2 117q16-6 32 0v6q-16-6-32 0z" fill="#c0c0c0" />
        <path d="M2 117q16-6 32 0M2 123q16-6 32 0M17 149q5-4 14-4v6" stroke="#000" fill="none" strokeWidth="1.500" />
        <path d="M17 156h5l-2 3z" />
      </svg>
    </aside>
  );
}

function VisioCanvas() {
  return (
    <div className="flex">
      <div className="min-w-0 flex-1">
        <div className="flex h-[17px] overflow-hidden text-[10px] text-[#888]">
          <div className="flex w-[17px] shrink-0 justify-center border-r border-[#dcdcdc]">
            <svg className="h-4 w-4" viewBox="0 0 16 16" stroke="#c5d0ee"><path d="M8 1v14M1 8h14" /></svg>
          </div>
          <div className="w-[13px] shrink-0 border-b border-[#dcdcdc]" />
          {H_MARKS.map((n) => (
            <div key={n} className="flex w-[38px] shrink-0 items-end border-b border-l border-[#d5d5d5]">
              <span className="w-[18px] self-center pl-0.5 leading-[12px]">{n}</span>
              <i className="h-[11px] w-px bg-[#d0d0d0]" />
            </div>
          ))}
          <div className="flex-1 border-b border-l border-[#d5d5d5]" />
        </div>
        <div className="flex h-[497px] overflow-hidden">
          <div className="w-[17px] shrink-0 overflow-hidden border-r border-[#dcdcdc] pt-[4px] text-[10px] text-[#888]">
            {V_MARKS.map((n) => (
              <div key={n} className="flex h-[38px] flex-col items-end border-t border-[#d0d0d0]">
                <span className="mr-[4px] h-[18px] rotate-180 leading-[12px] [writing-mode:vertical-rl] text-right">{n}</span>
                <i className="h-px w-[11px] bg-[#d0d0d0]" />
              </div>
            ))}
          </div>
          <div className="min-w-0 flex-1 overflow-hidden"><Drawing /></div>
        </div>
      </div>
      <div className="mt-0.5 mb-[3px] flex w-[15px] flex-col bg-[#f1f1f1]">
        <ScrollArrow d="M0 6h8L4 2z" className="h-[15px]" />
        <div className="mt-[165px] h-[137px] border border-[#ababab] bg-white" />
        <ScrollArrow d="M0 2h8L4 6z" className="mt-auto h-[15px]" />
      </div>
    </div>
  );
}

function DataWindow() {
  return (
    <div className="flex">
      <div className="w-[47px] shrink-0 pl-[18px]">
        <svg className="mt-px h-4 w-5" viewBox="0 0 20 16" fill="none">
          <path d="M4 1h14" stroke="#3955a3" strokeWidth="2" />
          <path d="M18 1v7M12 1v6" stroke="#3955a3" />
          <path d="M5 10v2" stroke="#3955a3" />
        </svg>
        <button aria-label="Fenster schließen" className="mt-[2px] block"><CloseIcon className="h-[9px] w-[9px]" /></button>
      </div>
      <div className="flex h-[33px] flex-1 overflow-hidden border border-black bg-[#ababab] font-[Liberation_Sans] text-[11px] text-black">
        <table className="w-[743px] table-fixed border-collapse self-start whitespace-nowrap">
          <colgroup>
            <col className="w-[247px]" />
            <col className="w-[97px]" />
            <col className="w-[90px]" />
            <col className="w-[147px]" />
            <col className="w-[58px]" />
            <col className="w-[104px]" />
          </colgroup>
          <thead>
            <tr className="h-[18px] bg-[#fcfcfc] text-left [&>th]:border [&>th]:border-[#d5d5d5] [&>th]:pl-[5px] [&>th]:leading-[15px] [&>th]:font-normal">
              <th>Zeichnungsname</th>
              <th>Blattname</th>
              <th>Mastershape</th>
              <th>Shapedateneigenschaft</th>
              <th>Wert</th>
              <th>Farbe</th>
            </tr>
          </thead>
          <tbody>
            <tr className="bg-[#3399ff] leading-[20px] text-white [&>td]:overflow-hidden [&>td]:border-l [&>td]:border-[#a0b8d0] [&>td]:pl-0.5">
              <td>C:\Users\Administrator\Desktop\Example_DE.vsd</td>
              <td>Bürogebäude OG1</td>
              <td>Multiflaeche</td>
              <td>Flächen nach Beschaffenheit</td>
              <td>TEPPICH</td>
              <td className="bg-[#00ff00]" />
            </tr>
          </tbody>
        </table>
        <div className="ml-auto w-[17px] bg-white">
          <button aria-label="Hoch" className="flex h-4 w-[17px] items-center justify-center border border-[#c5c5c5]"><Chevron className="h-2 w-2 rotate-180" /></button>
          <button aria-label="Runter" className="flex h-4 w-[17px] items-center justify-center border border-[#c5c5c5]"><Chevron /></button>
        </div>
      </div>
    </div>
  );
}

function StatusBar() {
  return (
    <div className="flex h-[23px] items-center bg-[#3a55a4] pl-[7px] text-[11px] text-white">
      <span>ZEICHENBL. 6 VON 11</span>
      <span className="ml-5">DEUTSCH (DEUTSCHLAND)</span>
      <svg className="ml-[20px] h-[14px] w-[14px]" viewBox="0 0 14 14" fill="none" stroke="#fff">
        <circle cx="3.500" cy="3.500" r="3" fill="#fff" stroke="none" />
        <path d="M8 3h5v10H2V8M4 8h8M4 10.500h8M6 6v6M9 6v6" />
      </svg>
      <div className="ml-auto flex items-center pr-[21px]">
        <svg className="mr-[18px] h-[14px] w-[14px]" viewBox="0 0 14 14" fill="none" stroke="#fff" strokeWidth="1.300">
          <path d="M0 1h14M2 1v7h10V1M4 4h6M7 8v4M4 13h6" />
        </svg>
        <button aria-label="Verkleinern" className="h-0.5 w-[6px] bg-white" />
        <svg className="mx-[4px] h-[13px] w-[100px]" viewBox="0 0 100 13" fill="#fff">
          <path d="M0 6h100v1H0zM22 1h4v11h-4zM50 4h1v5h-1z" />
        </svg>
        <button aria-label="Vergrößern" className="mr-[15px]">
          <svg className="h-2 w-2" viewBox="0 0 8 8" stroke="#fff" strokeWidth="2"><path d="M0 4h8M4 0v8" /></svg>
        </button>
        <span className="mr-[14px]">50 %</span>
        <svg className="mr-[14px] h-[14px] w-[14px]" viewBox="0 0 14 14" fill="none" stroke="#fff">
          <path d="M.5.500h13v13H.500zM7 2v3M7 9v3M2 7h3M9 7h3M3 3l2 2M11 3L9 5M3 11l2-2M11 11L9 9" />
        </svg>
        <svg className="h-[14px] w-[14px]" viewBox="0 0 14 14" fill="none" stroke="#fff">
          <path d="M.5.500h5v4h-5zM8.500 3V.500h5v4M.5 7.500h3M.5 7.500v5h4M5.500 6.500h7v5h-7zM6 8h6" />
        </svg>
      </div>
    </div>
  );
}

function VisioWindow() {
  return (
    <div className="absolute top-[198px] right-0 left-[849px] border border-b-0 border-[#3a57a8] bg-white text-[11px] shadow-[0_0_8px_rgba(0,0,0,0.5)]">
      <VisioHeader />
      <div className="flex pt-[23px]">
        <ShapesPane />
        <div className="min-w-0 flex-1 pr-[6px]">
          <VisioCanvas />
          <div className="mt-px mr-[18px] ml-[2px] flex h-[15px] bg-[#f1f1f1]">
            <ScrollArrow d="M6 0v8L2 4z" className="w-[15px]" />
            <div className="ml-[323px] w-[289px] border border-[#ababab] bg-white" />
            <ScrollArrow d="M2 0v8l4-4z" className="ml-auto w-[15px]" />
          </div>
          <nav className="flex h-[56px] items-start pt-[12px] text-[#555]">
            {PAGES.map((p) => (
              <a
                key={p}
                href="#blatt"
                className={`border-r border-[#d8d8d8] px-[18px] leading-[16px] whitespace-nowrap ${p.endsWith('OG1') ? 'font-bold text-[#3955a3]' : ''}`}
              >
                {p}
              </a>
            ))}
            <button className="ml-[7px] flex items-center gap-1 border-x border-[#d8d8d8] px-[14px] leading-[16px]">
              Alle
              <svg className="h-1 w-2" viewBox="0 0 8 4" fill="#444"><path d="M0 4h8L4 0z" /></svg>
            </button>
            <button aria-label="Zeichenblatt hinzufügen" className="ml-[10px]">
              <svg className="h-4 w-4" viewBox="0 0 16 16" fill="none" stroke="#444"><circle cx="8" cy="8" r="7.400" /><path d="M4 8h8M8 4v8" strokeWidth="2" /></svg>
            </button>
          </nav>
          <DataWindow />
          <div className="h-px" />
        </div>
      </div>
      <StatusBar />
    </div>
  );
}

/* ---------- page ---------- */

export default function App() {
  return (
    <div className="relative min-h-screen overflow-hidden bg-white font-['Open_Sans','Noto_Sans',sans-serif] text-black">
      <div className="flex h-[18px] items-start justify-between bg-[#c5d5da]">
        <svg className="h-[14px] w-[12px] bg-[#0c2a50]" viewBox="0 0 12 14" fill="#fff"><path d="M0 11L3 3v8zM4 11L7 0v11zM8 11l2-8v8z" /></svg>
        <h1 className="pl-[80px] text-[14px] leading-[14px]">Bearbeiten - Flächensuche Reinigung</h1>
        <div className="flex h-[14px] border-b border-l border-[#6b7b80] [&>button]:flex [&>button]:items-center [&>button]:justify-center">
          <button aria-label="Minimieren" className="w-[26px] border-r border-[#6b7b80]"><i className="mt-1 h-[3px] w-2 bg-black" /></button>
          <button aria-label="Wiederherstellen" className="w-[26px] border-r border-[#6b7b80]">
            <svg className="h-[9px] w-[9px]" viewBox="0 0 9 9" fill="none" stroke="#000" strokeWidth="1.500"><path d="M3 3V1h5v5H6M1 3h5v5H1z" /></svg>
          </button>
          <button aria-label="Schließen" className="w-[48px]">
            <svg className="h-2 w-2" viewBox="0 0 8 8" stroke="#000" strokeWidth="2"><path d="M0 0l8 8M8 0L0 8" /></svg>
          </button>
        </div>
      </div>
      <div className="flex h-[25px] items-end border-b border-[#d0d0d0] text-[11px]">
        <button aria-label="Menü" className="flex h-[24px] w-[29px] items-center justify-center bg-[#1070c8]">
          <svg className="h-[6px] w-2" viewBox="0 0 8 6" fill="#fff"><path d="M0 0h8L4 6z" /></svg>
        </button>
        <button className="-mb-px ml-[3px] h-[24px] w-[56px] border border-b-0 border-[#d0d0d0] bg-white pt-1">START</button>
        <button className="h-[24px] pt-1 pl-[15px]">AKTIONEN</button>
        <span className="mr-1 ml-auto mb-1 flex h-4 w-4 items-center justify-center rounded-full bg-[#3f7fc0] text-[11px] font-bold text-white">?</span>
      </div>
      <Ribbon />
      <div className="h-[44px] pt-[10px] pl-[9px] text-[17px] leading-[26px] text-[#1b72c0]">Flächensuche Reinigung</div>
      <FilterPanel />
      <Results />
      <div className="mt-[15px] mr-[10px] ml-1 flex flex-col gap-px text-[13px] text-[#333]">
        {['Reinigungsflächenfilter', 'Reinigungsgruppenfilter', 'Merkmalsfilter'].map((t) => (
          <button key={t} className="flex h-[25px] items-center justify-between bg-[#efefef] pr-[10px] pl-[7px]">
            {t}
            <Chevron />
          </button>
        ))}
      </div>
      <div className="mt-[22px] mr-[11px] flex justify-end">
        <button className="h-[23px] w-[73px] border border-[#707070] bg-[#dddddd] text-[11px]">OK</button>
      </div>
      <VisioWindow />
      <svg className="pointer-events-none absolute top-[592px] left-0 h-4 w-[6px]" viewBox="0 0 6 16" fill="#fff" stroke="#000"><path d="M-4-2L5 7H1l3 6-2 1-3-6" /></svg>
    </div>
  );
}
